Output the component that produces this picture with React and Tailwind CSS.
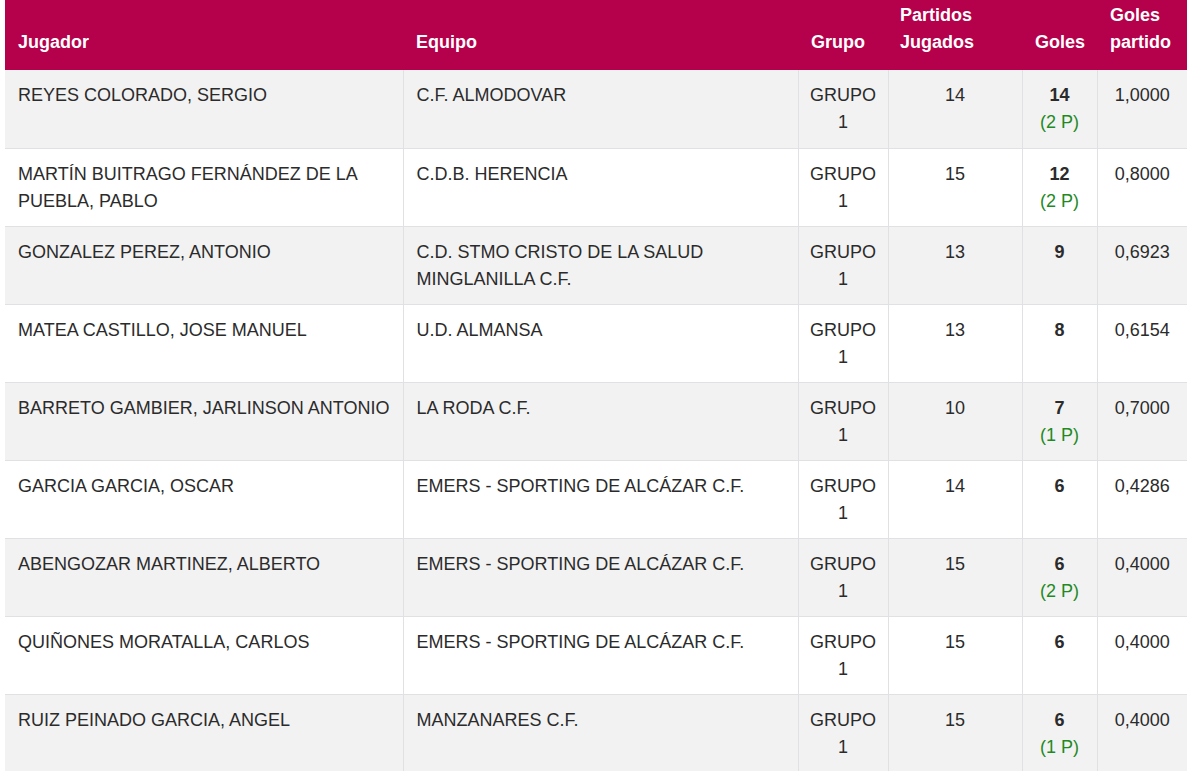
const rows = [
    { jugador: "REYES COLORADO, SERGIO", equipo: "C.F. ALMODOVAR", pj: 14, goles: 14, pen: "(2 P)", media: "1,0000" },
    { jugador: "MARTÍN BUITRAGO FERNÁNDEZ DE LA PUEBLA, PABLO", equipo: "C.D.B. HERENCIA", pj: 15, goles: 12, pen: "(2 P)", media: "0,8000" },
    { jugador: "GONZALEZ PEREZ, ANTONIO", equipo: "C.D. STMO CRISTO DE LA SALUD MINGLANILLA C.F.", pj: 13, goles: 9, pen: null, media: "0,6923" },
    { jugador: "MATEA CASTILLO, JOSE MANUEL", equipo: "U.D. ALMANSA", pj: 13, goles: 8, pen: null, media: "0,6154" },
    { jugador: "BARRETO GAMBIER, JARLINSON ANTONIO", equipo: "LA RODA C.F.", pj: 10, goles: 7, pen: "(1 P)", media: "0,7000" },
    { jugador: "GARCIA GARCIA, OSCAR", equipo: "EMERS - SPORTING DE ALCÁZAR C.F.", pj: 14, goles: 6, pen: null, media: "0,4286" },
    { jugador: "ABENGOZAR MARTINEZ, ALBERTO", equipo: "EMERS - SPORTING DE ALCÁZAR C.F.", pj: 15, goles: 6, pen: "(2 P)", media: "0,4000" },
    { jugador: "QUIÑONES MORATALLA, CARLOS", equipo: "EMERS - SPORTING DE ALCÁZAR C.F.", pj: 15, goles: 6, pen: null, media: "0,4000" },
    { jugador: "RUIZ PEINADO GARCIA, ANGEL", equipo: "MANZANARES C.F.", pj: 15, goles: 6, pen: "(1 P)", media: "0,4000" },
];

const App = () => {
    return (
        <div className="bg-white h-[771px] overflow-hidden pl-[5px] pr-[13px]" style={{ fontFamily: '"Liberation Sans", Arial, sans-serif' }}>
            <table className="w-[1182px] table-fixed border-collapse text-[18px] leading-[27px] text-[#2b2b2b]">
                <colgroup>
                    <col className="w-[398px]" />
                    <col className="w-[395px]" />
                    <col className="w-[90px]" />
                    <col className="w-[134px]" />
                    <col className="w-[75px]" />
                    <col className="w-[90px]" />
                </colgroup>
                <thead>
                    <tr className="bg-[#b5004b] text-white h-[70px]">
                        <th className="align-bottom text-left font-bold px-[13px] pb-[14px]">Jugador</th>
                        <th className="align-bottom text-left font-bold px-[13px] pb-[14px]">Equipo</th>
                        <th className="align-bottom text-left font-bold px-[13px] pb-[14px]">Grupo</th>
                        <th className="align-bottom text-left font-bold px-[12px] pb-[14px]">Partidos Jugados</th>
                        <th className="align-bottom text-left font-bold px-[13px] pb-[14px]">Goles</th>
                        <th className="align-bottom text-left font-bold px-[13px] pb-[14px]">Goles partido</th>
                    </tr>
                </thead>
                <tbody>
                    {rows.map((r, i) => (
                        <tr key={i} className={`h-[78px] border-b border-[#dfe1e4] ${i % 2 === 0 ? "bg-[#f2f2f2]" : "bg-white"}`}>
                            <td className="align-top px-[13px] pt-[12px]">{r.jugador}</td>
                            <td className="align-top px-[13px] pt-[12px] border-l border-[#dfe1e4]">{r.equipo}</td>
                            <td className="align-top text-center px-[8px] pt-[12px] border-l border-[#dfe1e4]">GRUPO 1</td>
                            <td className="align-top text-center px-[8px] pt-[12px] border-l border-[#dfe1e4]">{r.pj}</td>
                            <td className="align-top text-center px-[8px] pt-[12px] border-l border-[#dfe1e4]">
                                <div className="font-bold">{r.goles}</div>
                                {r.pen && <div className="text-[#1f8a1f]">{r.pen}</div>}
                            </td>
                            <td className="align-top text-center px-[8px] pt-[12px] border-l border-[#dfe1e4]">{r.media}</td>
                        </tr>
                    ))}
                </tbody>
            </table>
        </div>
    );
};

export default App;
